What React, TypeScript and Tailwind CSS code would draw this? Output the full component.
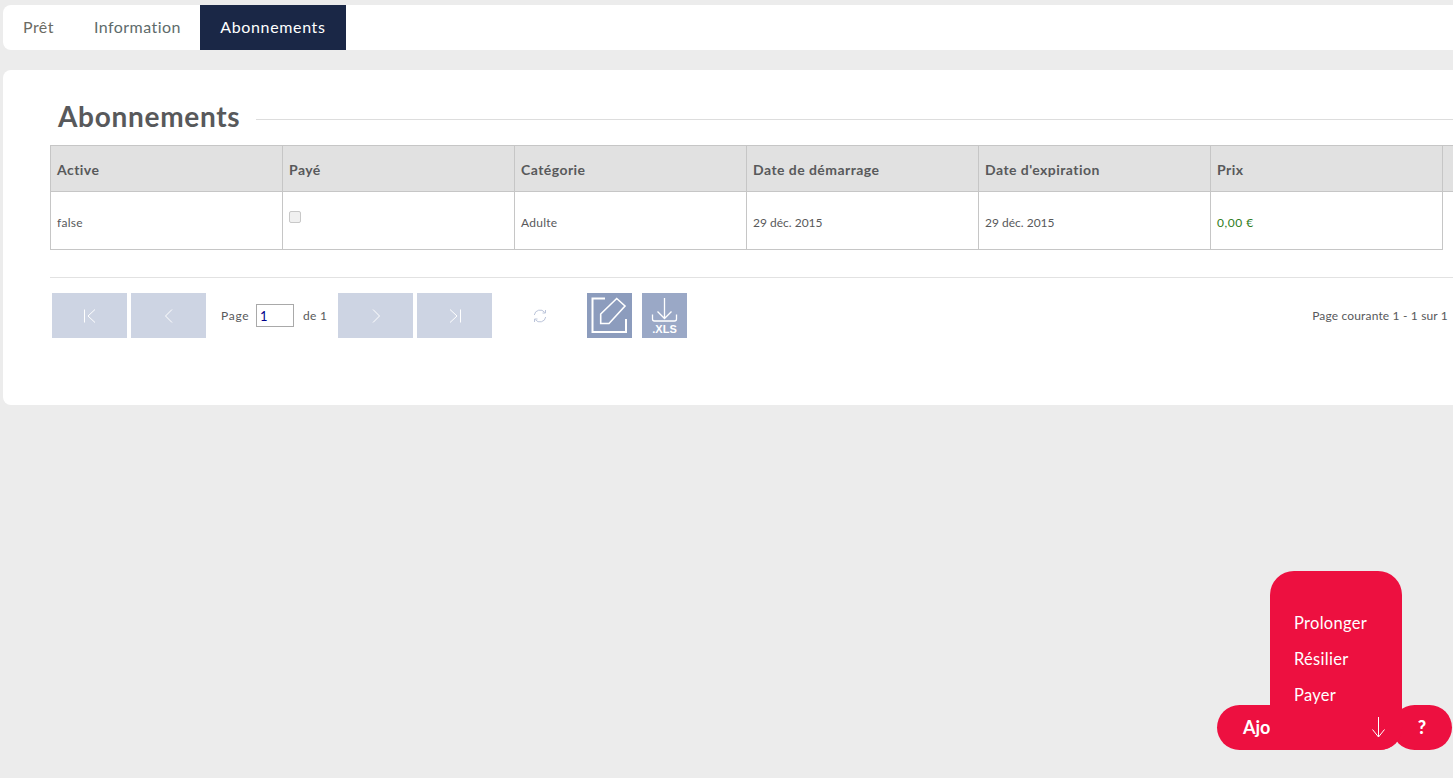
import React from 'react';

const font = "font-['Lato','Noto_Sans',sans-serif]";

const columns = ['Active', 'Payé', 'Catégorie', 'Date de démarrage', "Date d'expiration", 'Prix'];

const PagerButton = ({ children }: { children: React.ReactNode }) => (
  <button className="flex h-[45px] w-[75px] items-center justify-center bg-[#cdd4e3]">{children}</button>
);

const Thin = ({ d }: { d: string }) => (
  <svg width="16" height="16" viewBox="0 0 16 16" fill="none" stroke="#fff" strokeWidth="1">
    <path d={d} />
  </svg>
);

export default function App() {
  return (
    <div className={`relative h-[778px] w-full overflow-hidden bg-[#ececec] pl-[3px] pt-[5px] text-[#58595b] ${font}`}>
      {/* Tabs */}
      <div className="flex h-[45px] items-stretch rounded-l-lg bg-white text-[16px] tracking-[0.45px]">
        <a className="flex items-center pb-[2px] pl-5 pr-5 text-[#6b6b63]">Prêt</a>
        <a className="flex w-[126px] items-center pb-[2px] pl-5 text-[#5e6b6b]">Information</a>
        <a className="flex w-[146px] items-center justify-center bg-[#1a2746] pb-[2px] tracking-[0.65px] text-white">Abonnements</a>
      </div>

      {/* Card */}
      <div className="mt-[20px] h-[335px] rounded-l-lg bg-white pl-[47px] pt-[28px]">
        <div className="flex h-[47px] items-start pl-[8px]">
          <h2 className="-mt-px text-[28px] font-bold leading-[38px] tracking-[0.7px]">Abonnements</h2>
          <div className="ml-4 mt-[21px] h-px flex-1 bg-[#dddddd]" />
        </div>

        {/* Table */}
        <div className="flex h-[47px] border-y border-[#c6c6c6] bg-[#e1e1e1] text-[14px] font-bold tracking-[0.45px]">
          {columns.map((c) => (
            <div key={c} className="flex w-[232px] shrink-0 items-center border-l border-[#c6c6c6] pl-1.5 pt-[2px]">
              {c}
            </div>
          ))}
          <div className="w-[8px] shrink-0 border-l border-[#c6c6c6]" />
        </div>
        <div className="flex h-[58px] w-[1393px] border-b border-r border-[#c6c6c6] text-[12px] tracking-[0.25px]">
          <div className="flex w-[232px] shrink-0 items-center border-l border-[#c6c6c6] pl-1.5 pt-[4px]">false</div>
          <div className="w-[232px] shrink-0 border-l border-[#c6c6c6] pl-1.5 pt-[19px]">
            <div className="h-3 w-3 rounded-[2px] border border-[#c8c8c8] bg-[#f0f0f0]" />
          </div>
          <div className="flex w-[232px] shrink-0 items-center border-l border-[#c6c6c6] pl-1.5 pt-[4px]">Adulte</div>
          <div className="flex w-[232px] shrink-0 items-center border-l border-[#c6c6c6] pl-1.5 pt-[4px] tracking-normal">29 déc. 2015</div>
          <div className="flex w-[232px] shrink-0 items-center border-l border-[#c6c6c6] pl-1.5 pt-[4px] tracking-normal">29 déc. 2015</div>
          <div className="flex flex-1 items-center border-l border-[#c6c6c6] pl-1.5 pt-[4px] tracking-[0.5px] text-[#2f7d1e]">0,00 €</div>
        </div>

        {/* Pager */}
        <div className="mt-[27px] h-px bg-[#e2e2e2]" />
        <div className="flex h-[60px] items-start pl-[2px] pr-[5px] pt-[15px] text-[12px]">
          <div className="flex gap-1">
            <PagerButton>
              <Thin d="M2.5 1.5v13M13 1.5 6 8l7 6.5" />
            </PagerButton>
            <PagerButton>
              <Thin d="M11 1.5 4.5 8l6.5 6.5" />
            </PagerButton>
          </div>
          <div className="flex h-[45px] w-[132px] items-center pl-[15px]">
            <span className="w-[35px] tracking-[0.7px]">Page</span>
            <input
              readOnly
              value="1"
              className="h-[23px] w-[38px] border border-[#a9a9a9] pl-[3px] text-[13px] text-[#00008b] outline-none"
            />
            <span className="ml-[9px] tracking-[0.3px]">de 1</span>
          </div>
          <div className="flex gap-1">
            <PagerButton>
              <Thin d="M5 1.5 11.5 8 5 14.5" />
            </PagerButton>
            <PagerButton>
              <Thin d="M13.5 1.5v13M3 1.5 10 8l-7 6.5" />
            </PagerButton>
          </div>
          <div className="flex h-[45px] w-[95px] items-center justify-center">
            <svg width="16" height="16" viewBox="0 0 16 16" fill="none" stroke="#bcc5da" strokeWidth="1">
              <path d="M2.3 7a5.8 5.8 0 0 1 10.4-2.6M13.7 9a5.8 5.8 0 0 1-10.4 2.6" />
              <path d="M13.5 2v3h-3M2.5 14v-3h3" />
            </svg>
          </div>
          <button className="flex h-[45px] w-[45px] items-center justify-center bg-[#8c9cbd]">
            <svg width="37" height="37" viewBox="0 0 37 37" fill="none" stroke="#fff" strokeWidth="2">
              <path d="M14 1.5H1.5V35H35V22" />
              <path d="M9.7 26.5V17L25.7 1.5 34 9 18 26.5Z" strokeWidth="1.6" />
            </svg>
          </button>
          <button className="relative ml-[10px] flex h-[45px] w-[45px] flex-col items-center bg-[#9aa8c6] pt-[4px] text-white">
            <svg width="27" height="27" viewBox="0 0 27 27" fill="none" stroke="#fff" strokeWidth="1.3">
              <path d="M13.5 1v20.5M6.5 14.5l7 7 7-7M1.5 17.5V22a2 2 0 0 0 2 2h20a2 2 0 0 0 2-2v-4.5" />
            </svg>
            <span className="font-['Liberation_Sans',sans-serif] text-[11px] font-bold leading-[10px]">.XLS</span>
          </button>
          <div className="flex h-[45px] flex-1 items-center justify-end tracking-[0.16px]">Page courante 1 - 1 sur 1</div>
        </div>
      </div>

      {/* Floating actions */}
      <div className="absolute left-[1392px] top-[705px] flex h-[45px] w-[60px] items-center justify-center rounded-full bg-[#ed1040] text-[18px] font-black text-white">
        ?
      </div>
      <div className="absolute left-[1217px] top-[705px] flex h-[45px] w-[185px] items-center rounded-full bg-[#ed1040] pl-[26px] text-[18px] font-bold text-white">
        Ajouter
      </div>
      <div className="absolute left-[1270px] top-[571px] h-[179px] w-[132px] rounded-t-[24px] rounded-br-[22px] bg-[#ed1040] pl-6 pt-[34px] text-[16.5px] leading-[36px] tracking-[0.3px] text-white">
        <div>Prolonger</div>
        <div>Résilier</div>
        <div>Payer</div>
      </div>
      <svg
        className="absolute left-[1371px] top-[717px]"
        width="15"
        height="22"
        viewBox="0 0 15 22"
        fill="none"
        stroke="#fff"
        strokeWidth="1"
      >
        <path d="M7.5 0v20M1.5 12.5 7.5 20l6-7.5" />
      </svg>
    </div>
  );
}
